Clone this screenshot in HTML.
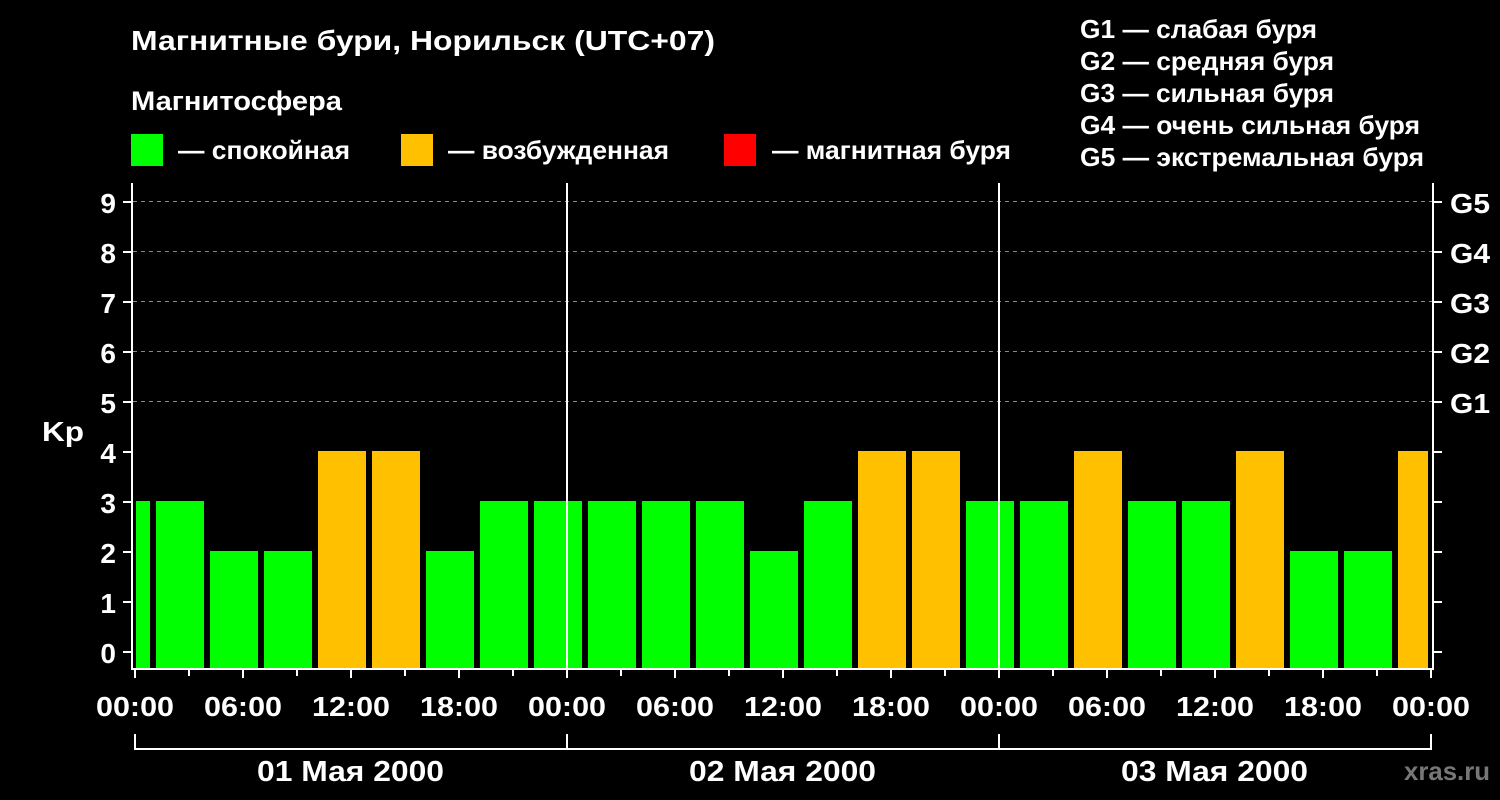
<!DOCTYPE html>
<html><head><meta charset="utf-8"><style>
html,body{margin:0;padding:0;background:#000;}
svg{display:block;font-family:"Liberation Sans",sans-serif;font-weight:bold;}
</style></head><body>
<svg width="1500" height="800" viewBox="0 0 1500 800" xmlns="http://www.w3.org/2000/svg">
<rect width="1500" height="800" fill="#000"/>
<g fill="#fff">
<text x="131" y="50" font-size="28" textLength="584" lengthAdjust="spacingAndGlyphs">Магнитные бури, Норильск (UTC+07)</text>
<text x="131" y="110" font-size="27" textLength="211" lengthAdjust="spacingAndGlyphs">Магнитосфера</text>
<text x="178" y="159" font-size="26" textLength="172" lengthAdjust="spacingAndGlyphs">— спокойная</text>
<text x="448" y="159" font-size="26" textLength="221" lengthAdjust="spacingAndGlyphs">— возбужденная</text>
<text x="772" y="159" font-size="26" textLength="239" lengthAdjust="spacingAndGlyphs">— магнитная буря</text>
<text x="1080" y="38" font-size="26" textLength="237" lengthAdjust="spacingAndGlyphs">G1 — слабая буря</text>
<text x="1080" y="70" font-size="26" textLength="254" lengthAdjust="spacingAndGlyphs">G2 — средняя буря</text>
<text x="1080" y="102" font-size="26" textLength="254" lengthAdjust="spacingAndGlyphs">G3 — сильная буря</text>
<text x="1080" y="134" font-size="26" textLength="340" lengthAdjust="spacingAndGlyphs">G4 — очень сильная буря</text>
<text x="1080" y="166" font-size="26" textLength="344" lengthAdjust="spacingAndGlyphs">G5 — экстремальная буря</text>
</g>
<rect x="131" y="134" width="32" height="32" fill="#00ff00"/>
<rect x="401" y="134" width="32" height="32" fill="#ffc000"/>
<rect x="724" y="134" width="32" height="32" fill="#ff0000"/>
<g stroke="#888" stroke-dasharray="4,4" stroke-width="1">
<line x1="133" y1="201.5" x2="1432" y2="201.5"/>
<line x1="133" y1="251.5" x2="1432" y2="251.5"/>
<line x1="133" y1="301.5" x2="1432" y2="301.5"/>
<line x1="133" y1="351.5" x2="1432" y2="351.5"/>
<line x1="133" y1="401.5" x2="1432" y2="401.5"/>
</g>
<g>
<rect x="136" y="501" width="14" height="167" fill="#00ff00"/>
<rect x="156" y="501" width="48" height="167" fill="#00ff00"/>
<rect x="210" y="551" width="48" height="117" fill="#00ff00"/>
<rect x="264" y="551" width="48" height="117" fill="#00ff00"/>
<rect x="318" y="451" width="48" height="217" fill="#ffc000"/>
<rect x="372" y="451" width="48" height="217" fill="#ffc000"/>
<rect x="426" y="551" width="48" height="117" fill="#00ff00"/>
<rect x="480" y="501" width="48" height="167" fill="#00ff00"/>
<rect x="534" y="501" width="48" height="167" fill="#00ff00"/>
<rect x="588" y="501" width="48" height="167" fill="#00ff00"/>
<rect x="642" y="501" width="48" height="167" fill="#00ff00"/>
<rect x="696" y="501" width="48" height="167" fill="#00ff00"/>
<rect x="750" y="551" width="48" height="117" fill="#00ff00"/>
<rect x="804" y="501" width="48" height="167" fill="#00ff00"/>
<rect x="858" y="451" width="48" height="217" fill="#ffc000"/>
<rect x="912" y="451" width="48" height="217" fill="#ffc000"/>
<rect x="966" y="501" width="48" height="167" fill="#00ff00"/>
<rect x="1020" y="501" width="48" height="167" fill="#00ff00"/>
<rect x="1074" y="451" width="48" height="217" fill="#ffc000"/>
<rect x="1128" y="501" width="48" height="167" fill="#00ff00"/>
<rect x="1182" y="501" width="48" height="167" fill="#00ff00"/>
<rect x="1236" y="451" width="48" height="217" fill="#ffc000"/>
<rect x="1290" y="551" width="48" height="117" fill="#00ff00"/>
<rect x="1344" y="551" width="48" height="117" fill="#00ff00"/>
<rect x="1398" y="451" width="30" height="217" fill="#ffc000"/>
</g>
<g stroke="#fff" stroke-width="2" fill="none">
<polyline points="132,183 132,669 1433,669 1433,183"/>
<line x1="567" y1="183" x2="567" y2="669"/>
<line x1="999" y1="183" x2="999" y2="669"/>
<path d="M123 652H131M123 602H131M123 552H131M123 502H131M123 452H131M123 402H131M123 352H131M123 302H131M123 252H131M123 202H131"/>
<path d="M1433 652H1442M1433 602H1442M1433 552H1442M1433 502H1442M1433 452H1442M1433 402H1442M1433 352H1442M1433 302H1442M1433 252H1442M1433 202H1442"/>
<path d="M135 670V678M243 670V678M351 670V678M459 670V678M567 670V678M675 670V678M783 670V678M891 670V678M999 670V678M1107 670V678M1215 670V678M1323 670V678M1431 670V678"/>
<path d="M189 670V676M297 670V676M405 670V676M513 670V676M621 670V676M729 670V676M837 670V676M945 670V676M1053 670V676M1161 670V676M1269 670V676M1377 670V676"/>
<polyline points="135,734 135,749 1431,749 1431,734"/>
<line x1="567" y1="734" x2="567" y2="749"/>
<line x1="999" y1="734" x2="999" y2="749"/>
</g>
<g fill="#fff" font-size="28" text-anchor="end">
<text x="116" y="663">0</text><text x="116" y="613">1</text><text x="116" y="563">2</text>
<text x="116" y="513">3</text><text x="116" y="463">4</text><text x="116" y="413">5</text>
<text x="116" y="363">6</text><text x="116" y="313">7</text><text x="116" y="263">8</text>
<text x="116" y="213">9</text>
</g>
<text x="42" y="441" fill="#fff" font-size="28" textLength="42" lengthAdjust="spacingAndGlyphs">Kp</text>
<g fill="#fff" font-size="28">
<text x="1450" y="213" textLength="40" lengthAdjust="spacingAndGlyphs">G5</text>
<text x="1450" y="263" textLength="40" lengthAdjust="spacingAndGlyphs">G4</text>
<text x="1450" y="313" textLength="40" lengthAdjust="spacingAndGlyphs">G3</text>
<text x="1450" y="363" textLength="40" lengthAdjust="spacingAndGlyphs">G2</text>
<text x="1450" y="413" textLength="40" lengthAdjust="spacingAndGlyphs">G1</text>
</g>
<g fill="#fff" font-size="28">
<text x="96" y="716" textLength="78" lengthAdjust="spacingAndGlyphs">00:00</text>
<text x="204" y="716" textLength="78" lengthAdjust="spacingAndGlyphs">06:00</text>
<text x="312" y="716" textLength="78" lengthAdjust="spacingAndGlyphs">12:00</text>
<text x="420" y="716" textLength="78" lengthAdjust="spacingAndGlyphs">18:00</text>
<text x="528" y="716" textLength="78" lengthAdjust="spacingAndGlyphs">00:00</text>
<text x="636" y="716" textLength="78" lengthAdjust="spacingAndGlyphs">06:00</text>
<text x="744" y="716" textLength="78" lengthAdjust="spacingAndGlyphs">12:00</text>
<text x="852" y="716" textLength="78" lengthAdjust="spacingAndGlyphs">18:00</text>
<text x="960" y="716" textLength="78" lengthAdjust="spacingAndGlyphs">00:00</text>
<text x="1068" y="716" textLength="78" lengthAdjust="spacingAndGlyphs">06:00</text>
<text x="1176" y="716" textLength="78" lengthAdjust="spacingAndGlyphs">12:00</text>
<text x="1284" y="716" textLength="78" lengthAdjust="spacingAndGlyphs">18:00</text>
<text x="1392" y="716" textLength="78" lengthAdjust="spacingAndGlyphs">00:00</text>
</g>
<g fill="#fff" font-size="29">
<text x="257" y="781" textLength="187" lengthAdjust="spacingAndGlyphs">01 Мая 2000</text>
<text x="689" y="781" textLength="187" lengthAdjust="spacingAndGlyphs">02 Мая 2000</text>
<text x="1121" y="781" textLength="187" lengthAdjust="spacingAndGlyphs">03 Мая 2000</text>
</g>
<text x="1404" y="780" fill="#777" font-size="26" textLength="86" lengthAdjust="spacingAndGlyphs">xras.ru</text>
</svg>
</body></html>
